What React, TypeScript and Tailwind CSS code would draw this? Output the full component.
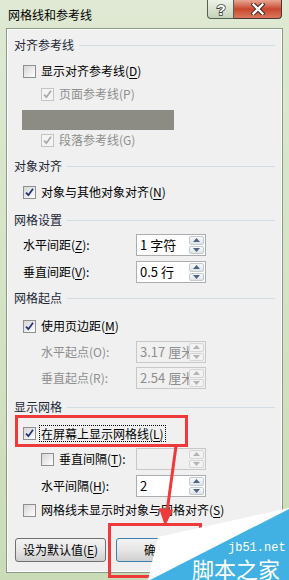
import React from "react";

const FONT = "font-['Noto_Sans_CJK_SC','Noto_Sans',sans-serif]";

function U({ children }: { children: React.ReactNode }) {
  return <span className="underline decoration-1 underline-offset-2">{children}</span>;
}

function Check({ checked, disabled }: { checked?: boolean; disabled?: boolean }) {
  return (
    <span
      className={`flex h-[13px] w-[13px] shrink-0 items-center justify-center border ${
        disabled
          ? "border-[#c4c4c4] bg-[#f4f4f4]"
          : "border-[#8e8f8f] bg-gradient-to-br from-[#d6d6d6] to-[#ffffff]"
      }`}
    >
      {checked && (
        <svg width="11" height="11" viewBox="0 0 11 11">
          <path
            d="M2 5.6 L4.4 8.2 L9 1.8"
            fill="none"
            stroke={disabled ? "#a9a9a9" : "#22357c"}
            strokeWidth="1.8"
          />
        </svg>
      )}
    </span>
  );
}

function Header({ children, className = "" }: { children: React.ReactNode; className?: string }) {
  return (
    <div className={`flex h-[18px] items-center pl-[6px] pr-[6px] text-[#1d2636] ${className}`}>
      <span>{children}</span>
      <div className="ml-[5px] h-px flex-1 bg-[#d3dde4]" />
    </div>
  );
}

function CheckRow({
  children,
  checked,
  disabled,
  indent,
  className = "",
}: {
  children: React.ReactNode;
  checked?: boolean;
  disabled?: boolean;
  indent?: boolean;
  className?: string;
}) {
  return (
    <div
      className={`flex h-[18px] items-center gap-[5px] ${indent ? "pl-[33px]" : "pl-[15px]"} ${
        disabled ? "text-[#8e8e8e]" : "text-black"
      } ${className}`}
    >
      <Check checked={checked} disabled={disabled} />
      <span className="whitespace-nowrap">{children}</span>
    </div>
  );
}

function SpinBtn({ up, disabled }: { up?: boolean; disabled?: boolean }) {
  return (
    <div
      className={`flex flex-1 items-center justify-center rounded-[2px] border ${
        disabled
          ? "border-[#d6d6d6] bg-[#f2f2f2]"
          : "border-[#c3cad2] bg-gradient-to-b from-[#f8f9fa] to-[#dfe4ea]"
      }`}
    >
      <svg width="7" height="4" viewBox="0 0 7 4">
        <path d={up ? "M0 4 L3.5 0 L7 4Z" : "M0 0 L3.5 4 L7 0Z"} fill={disabled ? "#b4b4b4" : "#4e6287"} />
      </svg>
    </div>
  );
}

function Spin({ value, disabled }: { value?: string; disabled?: boolean }) {
  return (
    <div
      className={`flex h-[22px] w-[70px] shrink-0 border ${
        disabled ? "border-[#c8c8c8] bg-[#f0f0f0] text-[#8e8e8e]" : "border-[#abadb3] bg-white text-black"
      }`}
    >
      <div className="flex-1 overflow-hidden whitespace-nowrap pl-[3px] text-[13px] leading-[20px]">{value}</div>
      <div className="flex w-[16px] flex-col gap-px py-px pr-px">
        <SpinBtn up disabled={disabled} />
        <SpinBtn disabled={disabled} />
      </div>
    </div>
  );
}

function FieldRow({
  label,
  value,
  disabled,
  indent,
  check,
  className = "",
}: {
  label: React.ReactNode;
  value?: string;
  disabled?: boolean;
  indent?: boolean;
  check?: boolean;
  className?: string;
}) {
  return (
    <div className={`flex h-[22px] items-center ${indent ? "pl-[33px]" : "pl-[15px]"} ${className}`}>
      <div
        className={`flex items-center gap-[5px] whitespace-nowrap ${indent ? "w-[95px]" : "w-[113px]"} ${
          disabled && !check ? "text-[#8e8e8e]" : "text-black"
        }`}
      >
        {check && <Check />}
        <span>{label}</span>
      </div>
      <Spin value={value} disabled={disabled} />
    </div>
  );
}

function Button({ children, primary }: { children: React.ReactNode; primary?: boolean }) {
  return (
    <div
      className={`flex h-[24px] items-center justify-center rounded-[3px] border bg-gradient-to-b from-[#f3f3f3] via-[#e6e6e6] to-[#cfcfcf] ${
        primary ? "w-[80px] border-[#3c7fb1]" : "w-[91px] border-[#707070]"
      }`}
    >
      {children}
    </div>
  );
}

export default function App() {
  return (
    <div
      className={`relative flex h-[580px] w-[289px] flex-col overflow-hidden bg-gradient-to-b from-[#dfe9d3] to-[#cadcb7] text-[12px] ${FONT}`}
    >
      {/* title bar */}
      <div className="flex h-[28px] shrink-0 items-start">
        <div className="pl-[8px] pt-[6px] leading-[18px] text-black">网格线和参考线</div>
        <div className="ml-auto mr-[7px] flex">
          <div className="flex h-[19px] w-[27px] items-center justify-center rounded-bl-[4px] border border-t-0 border-[#56604e] bg-gradient-to-b from-[#eef2e8] to-[#c5d2b9]">
            <svg width="12" height="15" viewBox="0 0 12 15">
              <text
                x="6"
                y="13"
                textAnchor="middle"
                fontSize="15"
                fontWeight="bold"
                fontFamily="Liberation Sans, sans-serif"
                fill="#fff"
                stroke="#3a3f3a"
                strokeWidth="1.6"
                paintOrder="stroke"
              >
                ?
              </text>
            </svg>
          </div>
          <div className="flex h-[19px] w-[48px] items-center justify-center rounded-br-[4px] border border-l-0 border-t-0 border-[#4a3530] bg-gradient-to-b from-[#e8a593] via-[#c8472d] to-[#d9775c]">
            <svg width="14" height="12" viewBox="0 0 14 12">
              <path d="M2.5 1.5 L11.5 10.5 M11.5 1.5 L2.5 10.5" stroke="#3b2a26" strokeWidth="4.4" strokeLinecap="square" />
              <path d="M2.5 1.5 L11.5 10.5 M11.5 1.5 L2.5 10.5" stroke="#ffffff" strokeWidth="2.4" strokeLinecap="square" />
            </svg>
          </div>
        </div>
      </div>

      {/* panel */}
      <div className="mx-[6px] mb-[7px] flex flex-1 flex-col border border-[#8d9b86]">
        <div className="flex flex-1 flex-col border border-white bg-[#f0f0f0] leading-[18px]">
          <Header className="mt-[6px]">对齐参考线</Header>
          <CheckRow className="mt-[8px]">
            显示对齐参考线(<U>D</U>)
          </CheckRow>
          <CheckRow className="mt-[5px]" indent checked disabled>
            页面参考线(P)
          </CheckRow>
          <div className="ml-[14px] mt-[7px] h-[20px] w-[152px] bg-[#8c8c85]" />
          <CheckRow className="mt-px" indent checked disabled>
            段落参考线(G)
          </CheckRow>

          <Header className="mt-[8px]">对象对齐</Header>
          <CheckRow className="mt-[8px]" checked>
            对象与其他对象对齐(<U>N</U>)
          </CheckRow>

          <Header className="mt-[10px]">网格设置</Header>
          <FieldRow
            className="mt-[5px]"
            label={
              <>
                水平间距(<U>Z</U>):
              </>
            }
            value="1 字符"
          />
          <FieldRow
            className="mt-[5px]"
            label={
              <>
                垂直间距(<U>V</U>):
              </>
            }
            value="0.5 行"
          />

          <Header className="mt-[6px]">网格起点</Header>
          <CheckRow className="mt-[10px]" checked>
            使用页边距(<U>M</U>)
          </CheckRow>
          <FieldRow className="mt-[6px]" indent disabled label="水平起点(O):" value="3.17 厘米" />
          <FieldRow className="mt-[4px]" indent disabled label="垂直起点(R):" value="2.54 厘米" />

          <Header className="mt-[9px]">显示网格</Header>
          <div className="relative mt-[8px] flex h-[18px] items-center gap-[3px] pl-[15px]">
            <Check checked />
            <span className="whitespace-nowrap border border-dotted border-black px-px leading-[15px]">
              在屏幕上显示网格线(<U>L</U>)
            </span>
            <div className="absolute left-[7px] top-[-9px] h-[32px] w-[173px] border-[3px] border-[#ee3a3a]" />
          </div>
          <FieldRow
            className="mt-[6px]"
            indent
            check
            disabled
            label={
              <>
                垂直间隔(<U>T</U>):
              </>
            }
          />
          <FieldRow
            className="mt-[5px]"
            indent
            label={
              <>
                水平间隔(<U>H</U>):
              </>
            }
            value="2"
          />
          <CheckRow className="mt-[4px]">
            网格线未显示时对象与网格对齐(<U>S</U>)
          </CheckRow>

          <div className="relative mt-[19px] flex gap-[10px] pl-[7px]">
            <Button>
              设为默认值(<U>E</U>)
            </Button>
            <Button primary>确定</Button>
            <div className="absolute left-[100px] top-[-15px] h-[55px] w-[94px] border-[3px] border-[#ee3a3a]" />
          </div>
        </div>
      </div>

      {/* annotation arrow and watermark background */}
      <svg className="absolute inset-0" width="289" height="580" viewBox="0 0 289 580">
        <path d="M176 446 L167 512" stroke="#ee3a3a" strokeWidth="3" />
        <path d="M159 508 L173 510 L165 526Z" fill="#ee3a3a" />
        <polygon points="289,508 158,537 148,580 289,580" fill="#ffffff" />
        <polygon points="289,509 150,580 289,580" fill="#41b1e3" />
      </svg>

      {/* watermark */}
      <div className="absolute left-[228px] top-[542px] font-['Liberation_Mono',monospace] text-[12px] leading-[12px] text-white">
        jb51.net
      </div>
      <div className="absolute left-[192px] top-[557px] text-[22px] leading-[22px] text-white">脚本之家</div>
    </div>
  );
}
